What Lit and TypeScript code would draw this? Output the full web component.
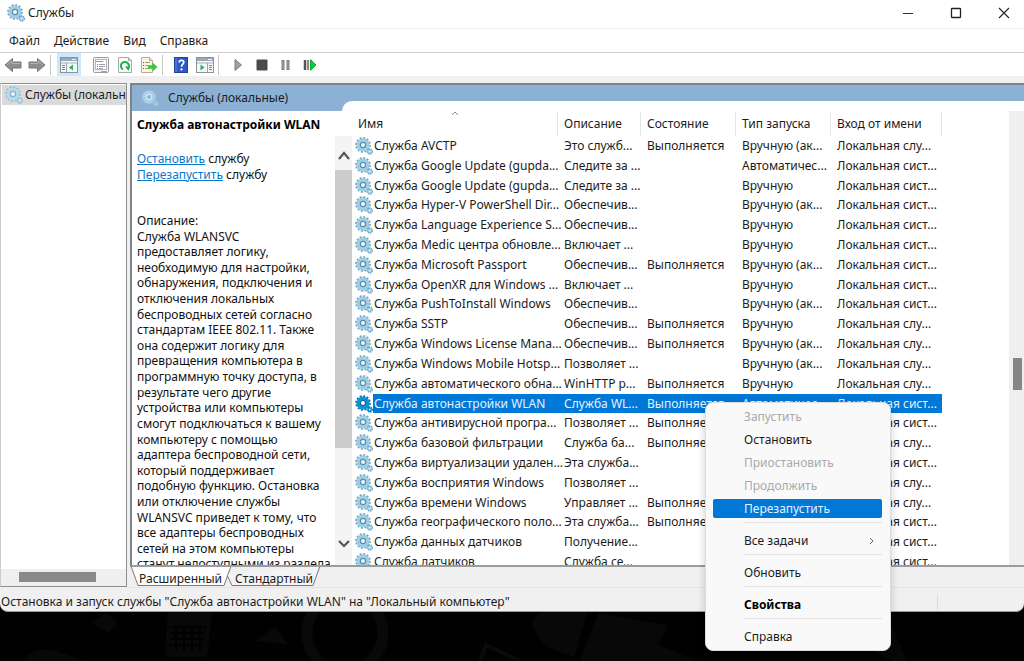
import { LitElement, html, css, svg, nothing } from "lit";
import { customElement, property } from "lit/decorators.js";
import { classMap } from "lit/directives/class-map.js";

interface Service {
  name: string;
  info: string;
  running?: boolean;
  start: string;
  logon: string;
  selected?: boolean;
}

const SYS = "Локальная сист...";
const SRV = "Локальная слу...";
const MANUAL = "Вручную";
const TRIGGER = "Вручную (ак...";

const SERVICES: Service[] = [
  { name: "Служба AVCTP", info: "Это служб...", running: true, start: TRIGGER, logon: SRV },
  { name: "Служба Google Update (gupda...", info: "Следите за ...", start: "Автоматичес...", logon: SYS },
  { name: "Служба Google Update (gupda...", info: "Следите за ...", start: MANUAL, logon: SYS },
  { name: "Служба Hyper-V PowerShell Dir...", info: "Обеспечив...", start: TRIGGER, logon: SYS },
  { name: "Служба Language Experience S...", info: "Обеспечив...", start: MANUAL, logon: SYS },
  { name: "Служба Medic центра обновле...", info: "Включает ...", start: MANUAL, logon: SYS },
  { name: "Служба Microsoft Passport", info: "Обеспечив...", running: true, start: TRIGGER, logon: SYS },
  { name: "Служба OpenXR для Windows ...", info: "Включает ...", start: MANUAL, logon: SYS },
  { name: "Служба PushToInstall Windows", info: "Обеспечив...", start: TRIGGER, logon: SYS },
  { name: "Служба SSTP", info: "Обеспечив...", running: true, start: MANUAL, logon: SRV },
  { name: "Служба Windows License Mana...", info: "Обеспечив...", running: true, start: TRIGGER, logon: SRV },
  { name: "Служба Windows Mobile Hotsp...", info: "Позволяет ...", start: TRIGGER, logon: SRV },
  { name: "Служба автоматического обна...", info: "WinHTTP р...", running: true, start: MANUAL, logon: SRV },
  { name: "Служба автонастройки WLAN", info: "Служба WL...", running: true, start: "Автоматичес...", logon: SYS, selected: true },
  { name: "Служба антивирусной програ...", info: "Позволяет ...", running: true, start: "Автоматичес...", logon: SYS },
  { name: "Служба базовой фильтрации", info: "Служба ба...", running: true, start: "Автоматичес...", logon: SRV },
  { name: "Служба виртуализации удален...", info: "Эта служба...", start: MANUAL, logon: SYS },
  { name: "Служба восприятия Windows", info: "Позволяет ...", start: TRIGGER, logon: SRV },
  { name: "Служба времени Windows", info: "Управляет ...", running: true, start: TRIGGER, logon: SRV },
  { name: "Служба географического поло...", info: "Эта служба...", running: true, start: TRIGGER, logon: SYS },
  { name: "Служба данных датчиков", info: "Получение...", start: TRIGGER, logon: SYS },
  { name: "Служба датчиков", info: "Служба се...", start: TRIGGER, logon: SYS },
];

const DESCRIPTION = [
  "Описание:",
  "Служба WLANSVC",
  "предоставляет логику,",
  "необходимую для настройки,",
  "обнаружения, подключения и",
  "отключения локальных",
  "беспроводных сетей согласно",
  "стандартам IEEE 802.11. Также",
  "она содержит логику для",
  "превращения компьютера в",
  "программную точку доступа, в",
  "результате чего другие",
  "устройства или компьютеры",
  "смогут подключаться к вашему",
  "компьютеру с помощью",
  "адаптера беспроводной сети,",
  "который поддерживает",
  "подобную функцию. Остановка",
  "или отключение службы",
  "WLANSVC приведет к тому, что",
  "все адаптеры беспроводных",
  "сетей на этом компьютеры",
  "станут недоступными из раздела",
];

@customElement("gear-icon")
class GearIcon extends LitElement {
  @property() tone = "normal";

  static styles = css`
    :host { display: block; width: 18px; height: 18px; flex: none; }
    svg { display: block; }
  `;

  render() {
    const tones: Record<string, string[]> = {
      normal: ["#6c9fbc", "#9ccfe6", "#5c8ba8", "#f4fafd"],
      pale: ["#8db9d3", "#b5dbed", "#86b3cc", "#f0f4f6"],
      ghost: ["#94b9d4", "#a9d0e6", "#d3eaf6", "#8fb2d3"],
      active: ["#0078b8", "#0f93d2", "#006aa8", "#ffffff"],
    };
    const [teeth, body, rim, hole] = tones[this.tone];
    return html`<svg width="18" height="18" viewBox="0 0 18 18" aria-hidden="true">
      <circle cx="8" cy="8" r="6.800" fill="none" stroke=${teeth} stroke-width="2" stroke-dasharray="2 1.560"></circle>
      <circle cx="8" cy="8" r="4.800" fill="none" stroke=${body} stroke-width="3.600"></circle>
      <circle cx="8" cy="8" r="2.600" fill=${hole} stroke=${rim} stroke-width="1.200"></circle>
      <circle cx="14.800" cy="14.500" r="2.300" fill="none" stroke=${teeth} stroke-width="1.800" stroke-dasharray="1.300 .5"></circle>
      <circle cx="14.800" cy="14.500" r="1.400" fill=${hole} stroke=${body} stroke-width="1.300"></circle>
    </svg>`;
  }
}

const pane = (flip: boolean) => svg`
  <rect x=".5" y="1.5" width="17" height="15" fill="#f5f6f8" stroke="#8a949c"/>
  <rect x="1" y="2" width="16" height="3" fill="#9aa9b5"/>
  <path d="M12 3.5h4" stroke="#eef3f7"/>
  <path d="M1 7h16" stroke="#a9b1b8"/>
  ${flip
    ? svg`<path d="M11.5 7v9" stroke="#9aa3ab"/><path d="M13 9.500h3M13 11.500h3M13 13.500h3" stroke="#7c8790"/><path d="M4.500 8.500v6l4-3z" fill="#2ab34b"/>`
    : svg`<path d="M6.500 7v9" stroke="#9aa3ab"/><path d="M2 9.500h3M2 11.500h3M2 13.500h3" stroke="#7c8790"/><path d="M13 8.500v6l-4-3z" fill="#2ab34b"/>`}`;

const arrow = svg`<path d="M1 9 8.500 2.500V6H17v6H8.500v3.500z" fill="#8e8e8e" stroke="#777" stroke-linejoin="round"/><path d="M3 9 8 5v2.500h8" fill="none" stroke="#b5b5b5"/>`;

const ICONS: Record<string, unknown> = {
  back: arrow,
  forward: svg`<g transform="matrix(-1 0 0 1 18 0)">${arrow}</g>`,
  tree: pane(false),
  action: pane(true),
  props: svg`<rect x="1.500" y="1.500" width="15" height="15" rx="1" fill="#f3f3f3" stroke="#9b9b9b"/><rect x="3.500" y="3.500" width="11" height="10" fill="#fff" stroke="#b4bac0"/><path d="M4 5.500h7" stroke="#8b98a4"/><path d="M5 8.500h1M5 10.500h1M5 12.500h1" stroke="#3d8fd1"/><path d="M7 8.500h6M7 10.500h6M7 12.500h4" stroke="#9aa3ab"/><path d="M9 15.500h6" stroke="#7fb4d8"/>`,
  refresh: svg`<path d="M2.500 1.500h10l3 3v12h-13z" fill="#fafafa" stroke="#a9a9a9"/><path d="M12.500 1.500v3h3" fill="#ddd" stroke="#a9a9a9"/><path d="M6.800 13.300a4 4 0 1 1 4.800-.4" fill="none" stroke="#22b14c" stroke-width="2"/><path d="M9 10.500 14 10.200 12.500 15z" fill="#22b14c"/>`,
  export: svg`<path d="M1.500 1.500h8l3 3v12h-11z" fill="#fbf6e4" stroke="#b7ad94"/><path d="M9.500 1.500v3h3" fill="#e8dfc6" stroke="#b7ad94"/><path d="M3 6.500h1M3 9.500h1M3 12.500h1" stroke="#555"/><path d="M5 6.500h5M5 9.500h4M5 12.500h4" stroke="#a9a08c"/><path d="M8 9.300h4.500V6.500l5 4.500-5 4.500v-2.800H8z" fill="#3cc43c"/>`,
  help: svg`<rect x="2.500" y="1.500" width="13" height="15" fill="#3159c4" stroke="#23419b"/><path d="M4 2v14" stroke="#6d8be0"/><path d="M7.200 6.600c0-3.200 4.600-3 4.600-.3 0 1.900-2.300 2-2.300 4.400" fill="none" stroke="#fff" stroke-width="1.700"/><circle cx="9.500" cy="13.400" r="1.100" fill="#fff"/>`,
  play: svg`<path d="M6 3.500v11l6.500-5.500z" fill="#a0a0a0" stroke="#7c7c7c"/>`,
  stop: svg`<rect x="3.500" y="3.500" width="11" height="11" rx="1" fill="#4a4a4a"/>`,
  pause: svg`<path d="M6 4v10M11 4v10" stroke="#7d7d7d" stroke-width="3"/><path d="M6 5v8M11 5v8" stroke="#a5a5a5"/>`,
  restart: svg`<path d="M4 4v10" stroke="#555" stroke-width="2.500"/><path d="M9.500 3.500v11l5.500-5.500z" fill="#12c23a" stroke="#12b835"/><path d="M7 4v10" stroke="#666" stroke-width="1.500"/>`,
};

@customElement("app-root")
class AppRoot extends LitElement {
  static styles = css`
    :host {
      display: flex;
      flex-direction: column;
      position: relative;
      height: 100vh;
      overflow: hidden;
      background: #010101;
      font: 12px/18px "Noto Sans", "Open Sans", sans-serif;
      color: #1c1c1c;
    }
    * { box-sizing: border-box; }
    button { font: inherit; color: inherit; border: 0; background: none; padding: 0; margin: 0; }
    .wallpaper { position: absolute; left: 0; bottom: 0; width: 100%; height: 50px; }
    .window {
      position: relative;
      display: flex;
      flex-direction: column;
      flex: 1;
      min-height: 0;
      margin-bottom: 49px;
      background: #f0f0f0;
      border-radius: 0 0 8px 8px;
      border-bottom: 1px solid #9a9a9a;
      overflow: hidden;
    }
    .title { display: flex; align-items: center; flex: none; height: 28px; padding: 0 0 2px 7px; gap: 8px; background: #fff; }
    .title h1 { display: flex; align-items: center; gap: 3px; flex: 1; margin: 0; font-size: 12px; font-weight: 400; }
    .caption { width: 40px; height: 26px; display: grid; place-items: center; }
    .menu { display: flex; flex: none; height: 25px; padding: 0 9px; gap: 14px; align-items: center; background: #fff; border-top: 1px solid #eee; border-bottom: 1px solid #cfcfcf; }
    .toolbar { display: flex; flex: none; height: 23px; padding-left: 1px; background: #fff; }
    .tool { display: grid; place-items: center; width: 24px; height: 23px; }
    .tool.on { background: #cce8fc; }
    .sep { width: 8px; padding: 2px 1px; }
    .sep i { display: block; width: 1px; height: 20px; background: #c4c4c4; }
    .tool.on + .sep i { background: none; }
    .media { display: flex; padding-left: 1px; }
    .workspace { display: flex; flex: 1; min-height: 0; padding-top: 7px; gap: 3px; }
    .side { display: flex; flex-direction: column; width: 127px; margin-bottom: 1px; flex: none; background: #fff; border: 1px solid #8e8e8e; border-left-color: #ccc; padding-top: 1px; }
    .node { display: flex; align-items: center; gap: 2px; height: 20px; margin-left: 1px; padding-left: 3px; background: #dadada; overflow: hidden; white-space: nowrap; text-align: left; }
    .hscroll { height: 17px; margin-top: auto; padding: 3px 30px 4px 18px; background: #efefef; }
    .hscroll i { display: block; height: 10px; background: #8a8a8a; }
    .main { display: flex; flex-direction: column; flex: 1; min-width: 0; }
    .frame { display: flex; flex-direction: column; flex: 1; min-height: 0; background: #fff; border: 2px solid #7f8287; border-right: 0; border-bottom-color: #9c9c9c; }
    .banner { display: flex; flex: none; height: 26px; background: #8db1d4; }
    .banner h2 { display: flex; align-items: center; gap: 9px; width: 210px; margin: 0; padding-left: 9px; font-size: 12px; font-weight: 400; }
    .curve { flex: 1; align-self: flex-end; height: 10px; background: #fff; border-top-left-radius: 10px; }
    .content { display: flex; flex: 1; min-height: 0; overflow: hidden; }
    .details { width: 203px; flex: none; padding: 5px 0 0 5px; white-space: nowrap; color: #111; }
    .details h3 { margin: 0 0 17px; font-size: 12px; line-height: 18px; font-weight: 700; color: #000; }
    .details p { margin: 0; line-height: 16px; }
    .details a { color: #0a78c8; }
    .text { display: grid; grid-auto-rows: 1fr; height: 359px; margin-top: 30px; line-height: 15px; }
    .vscroll { display: flex; flex-direction: column; width: 17px; flex: none; margin-top: 25px; background: #f4f4f4; }
    .vscroll button { display: grid; place-items: center; height: 34px; }
    .bar { height: 278px; background: #cdcdcd; }
    .vscroll .down { margin-top: auto; height: 42px; }
    .list { display: flex; flex-direction: column; position: relative; flex: 1; min-width: 0; }
    table, thead { display: block; }
    table { width: 590px; }
    tr { display: grid; grid-template-columns: 206px 83px 95px 95px 111px; }
    th { height: 24px; margin-top: 1px; padding: 3px 0 0 6px; font-weight: 400; text-align: left; border-right: 1px solid #e6e6e6; }
    tbody { display: grid; grid-auto-rows: 1fr; height: 436px; }
    td { display: flex; align-items: center; padding: 0 0 0 6px; white-space: nowrap; }
    td.name { padding-left: 3px; }
    td.name span { flex: 1; align-self: stretch; display: flex; align-items: center; padding-left: 1px; }
    .selected td:not(.name), .selected .name span { background: #0078d7; color: #e4f2ff; }
    .sort { position: absolute; left: 99px; top: 0; }
    .rail { width: 15px; flex: none; padding: 247px 2px 0 4px; background: #efefef; }
    .rail i { display: block; height: 32px; background: #858585; }
    .tabs { display: flex; flex: none; height: 21px; border-bottom: 1px solid #e4e4e4; }
    .tab { position: relative; width: 101px; height: 20px; padding-top: 3px; }
    .tab + .tab { width: 94px; margin-left: -4px; }
    .tab svg { position: absolute; left: 0; top: 0; }
    .tab span { position: relative; }
    .status { display: flex; flex: none; height: 23px; padding: 5px 0 0 1px; align-items: center; }
    .status p { flex: 1; margin: 0; }
    .status i { width: 1px; height: 16px; margin-right: 86px; background: #dcdcdc; }
    .context {
      position: absolute;
      left: 705px;
      top: 402px;
      width: 186px;
      padding: 4px 8px 0 7px;
      background: #f9f9f9;
      border: 1px solid #dcdcdc;
      border-radius: 8px;
      box-shadow: 0 3px 8px rgba(0, 0, 0, 0.2);
    }
    .item { display: flex; align-items: center; justify-content: space-between; width: 100%; height: 19px; margin-bottom: 4px; padding: 0 8px 0 31px; border-radius: 2px; }
    .item:disabled { color: #a9a9a9; }
    .item.hot { background: #0078d7; color: #e4f2ff; }
    .item.bold { font-weight: 700; color: #000; }
    .context hr { height: 1px; margin: 0 0 8px 31px; border: 0; background: #e4e4e4; }
  `;

  private tool(name: string, label: string, on = false) {
    return html`<button class=${classMap({ tool: true, on })} aria-label=${label}>
      <svg width="18" height="18" viewBox="0 0 18 18">${ICONS[name]}</svg>
    </button>`;
  }

  private row(s: Service) {
    return html`<tr class=${classMap({ selected: !!s.selected })}>
      <td class="name"><gear-icon tone=${s.selected ? "active" : "normal"}></gear-icon><span>${s.name}</span></td>
      <td>${s.info}</td>
      <td>${s.running ? "Выполняется" : nothing}</td>
      <td>${s.start}</td>
      <td>${s.logon}</td>
    </tr>`;
  }

  render() {
    const sep = html`<div class="sep"><i></i></div>`;
    return html`
      <svg class="wallpaper" viewBox="0 0 1024 50" preserveAspectRatio="none" fill="#080808" aria-hidden="true">
        <path d="M168 0h44l-4 40q-1 6-6 6h-32q-6 0-5-6z"/>
        <path d="M172 16h34M171 22h34M170 28h34M169 34h34M176 14v26M184 14v26M192 14v26M200 14v26" stroke="#010101" stroke-width="2"/>
        <circle cx="345" cy="22" r="38" fill="none" stroke="#090909" stroke-width="11"/>
        <path d="M22 50q10-14 30-11l34 11zM92 12l15-10 11 10-10 10zM255 30l20-14 14 18zM532 10q4-10 20-10h36l-14 46-26-10q-12-8-16-26zM598 2l70 12-10 20 40 16H580zM824 12l64-6 18 42-4 8z"/>
        <path d="M480 50l6-16 34 16" fill="none" stroke="#0a0a0a" stroke-width="4"/>
      </svg>
      <main class="window">
        <header class="title">
          <h1><gear-icon tone="normal"></gear-icon>Службы</h1>
          <button class="caption" aria-label="Свернуть"><svg width="12" height="12"><path d="M1 6.500h10" stroke="#333"/></svg></button>
          <button class="caption" aria-label="Развернуть"><svg width="12" height="12"><rect x="1.500" y="1.500" width="9" height="9" rx=".5" fill="none" stroke="#222" stroke-width="1.300"/></svg></button>
          <button class="caption" aria-label="Закрыть"><svg width="12" height="12"><path d="M1 1l10 10M11 1 1 11" stroke="#222" stroke-width="1.100"/></svg></button>
        </header>
        <nav class="menu">
          <button>Файл</button><button>Действие</button><button>Вид</button><button>Справка</button>
        </nav>
        <div class="toolbar">
          ${this.tool("back", "Назад")}${this.tool("forward", "Вперед")}${sep}
          ${this.tool("tree", "Дерево консоли", true)}${sep}
          ${this.tool("props", "Свойства")}${this.tool("refresh", "Обновить")}${this.tool("export", "Экспорт")}${sep}
          ${this.tool("help", "Справка")}${this.tool("action", "Панель действий")}${sep}
          <div class="media">
            ${this.tool("play", "Запустить")}${this.tool("stop", "Остановить")}${this.tool("pause", "Приостановить")}${this.tool("restart", "Перезапустить")}
          </div>
        </div>
        <div class="workspace">
          <aside class="side">
            <button class="node"><gear-icon tone="pale"></gear-icon>Службы (локальн</button>
            <div class="hscroll"><i></i></div>
          </aside>
          <section class="main">
            <div class="frame">
              <div class="banner">
                <h2><gear-icon tone="ghost"></gear-icon>Службы (локальные)</h2>
                <div class="curve"></div>
              </div>
              <div class="content">
                <div class="details">
                  <h3>Служба автонастройки WLAN</h3>
                  <p><a href="#stop">Остановить</a> службу</p>
                  <p><a href="#restart">Перезапустить</a> службу</p>
                  <div class="text">${DESCRIPTION.map((line) => html`<div>${line}</div>`)}</div>
                </div>
                <div class="vscroll">
                  <button aria-label="Вверх"><svg width="12" height="14"><path d="M1 13l5-6 5 6" fill="none" stroke="#555" stroke-width="2.200"/></svg></button>
                  <div class="bar"></div>
                  <button class="down" aria-label="Вниз"><svg width="12" height="8"><path d="M1 1l5 5 5-5" fill="none" stroke="#555" stroke-width="2.200"/></svg></button>
                </div>
                <div class="list">
                  <svg class="sort" width="8" height="5"><path d="M1 4l3-3 3 3" fill="none" stroke="#8a8a8a"/></svg>
                  <table>
                    <thead><tr><th>Имя</th><th>Описание</th><th>Состояние</th><th>Тип запуска</th><th>Вход от имени</th></tr></thead>
                    <tbody>${SERVICES.map((s) => this.row(s))}</tbody>
                  </table>
                </div>
                <div class="rail"><i></i></div>
              </div>
            </div>
            <div class="tabs">
              <button class="tab"><svg width="101" height="20"><path d="M1 -1 8 18.500H94L101 -1" fill="#fff" stroke="#777"/></svg><span>Расширенный</span></button>
              <button class="tab"><svg width="94" height="20"><path d="M0 8 5 18.500H86L93 -1" fill="#f4f4f4" stroke="#777"/></svg><span>Стандартный</span></button>
            </div>
          </section>
        </div>
        <footer class="status"><p>Остановка и запуск службы "Служба автонастройки WLAN" на "Локальный компьютер"</p><i></i></footer>
      </main>
      <div class="context" role="menu">
        <button class="item" disabled>Запустить</button>
        <button class="item">Остановить</button>
        <button class="item" disabled>Приостановить</button>
        <button class="item" disabled>Продолжить</button>
        <button class="item hot">Перезапустить</button>
        <hr>
        <button class="item">Все задачи<svg width="5" height="8"><path d="M1 1l3 3-3 3" fill="none" stroke="#666"/></svg></button>
        <hr>
        <button class="item">Обновить</button>
        <hr>
        <button class="item bold">Свойства</button>
        <hr>
        <button class="item">Справка</button>
      </div>
    `;
  }
}
